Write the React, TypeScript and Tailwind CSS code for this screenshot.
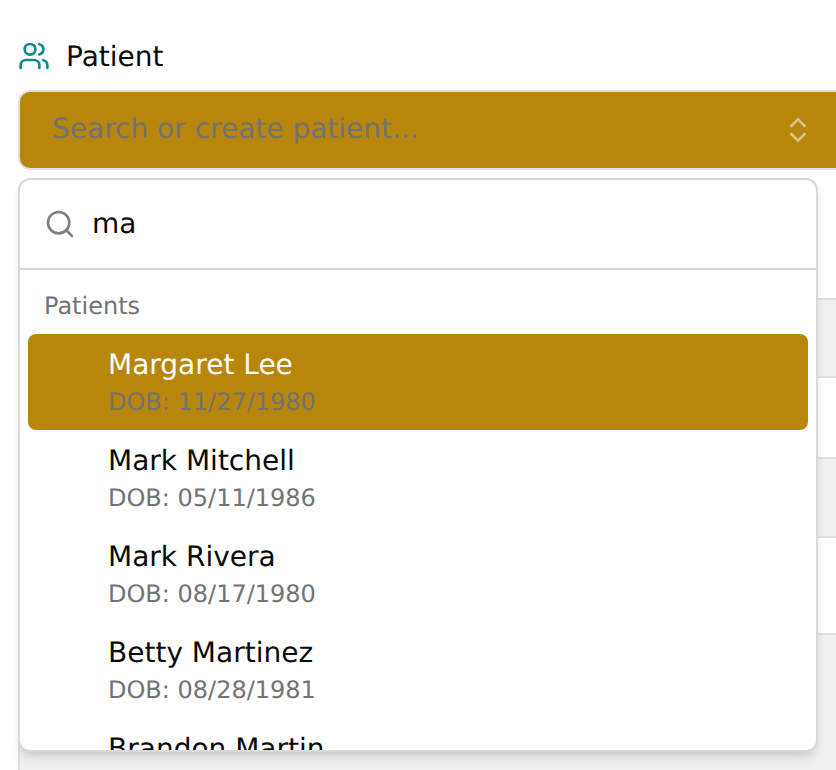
import { ChevronsUpDown, Search, Users } from "lucide-react";

const PATIENTS = [
  { name: "Margaret Lee", dob: "11/27/1980" },
  { name: "Mark Mitchell", dob: "05/11/1986" },
  { name: "Mark Rivera", dob: "08/17/1980" },
  { name: "Betty Martinez", dob: "08/28/1981" },
  { name: "Brandon Martin", dob: null },
];

const ROWS = [
  { h: "h-[78px]", bg: "bg-[#f0f0f0]" },
  { h: "h-[81px]", bg: "bg-white" },
  { h: "h-[79px]", bg: "bg-[#f0f0f0]" },
  { h: "h-[97px]", bg: "bg-white" },
  { h: "h-[140px]", bg: "bg-[#f0f0f0]" },
];

export default function App() {
  return (
    <div className="relative h-[770px] w-[836px] overflow-hidden bg-white pl-[18px] pt-[40px] font-['DejaVu_Sans',sans-serif] text-[28px] text-[#0a0a0a] opacity-[0.999] [text-rendering:geometricPrecision]">
      <div className="flex h-[32px] items-center gap-[16px]">
        <Users size={32} className="text-[#0d8a8a]" />
        <span className="mt-[2px]">Patient</span>
      </div>

      <div className="mt-[18px] flex h-[80px] w-[840px] items-center justify-between rounded-[12px] border-2 border-[#e0e0e0] bg-[#b8860b] pl-[32px] pr-[42px] text-[#737373]">
        <span className="mb-[2px]">Search or create patient...</span>
        <ChevronsUpDown size={32} className="text-white opacity-50" strokeWidth={2} />
      </div>

      {/* table sitting behind the popover */}
      <div className="mt-[128px] w-[840px] border-l-2 border-[#e0e0e0]">
        {ROWS.map((r, i) => (
          <div key={i} className={`${r.h} ${r.bg} border-t-2 border-[#e0e0e0]`} />
        ))}
      </div>

      <div className="absolute left-[18px] top-[178px] flex h-[574px] w-[800px] flex-col overflow-hidden rounded-[12px] border-2 border-[#d9d9d9] bg-white shadow-[0_8px_12px_-2px_rgba(0,0,0,0.1),0_4px_8px_-4px_rgba(0,0,0,0.1)]">
        <div className="flex h-[90px] shrink-0 items-center gap-[16px] border-b-2 border-[#d9d9d9] px-[24px]">
          <Search size={32} className="shrink-0 text-[#808080]" />
          <span>ma</span>
        </div>
        <div className="min-h-0 flex-1 overflow-hidden px-[8px] pt-[8px]">
          <div className="flex h-[56px] items-center px-[16px] text-[24px] text-[#737373]">Patients</div>
          {PATIENTS.map((p, i) => (
            <div
              key={p.name}
              className={`h-[96px] rounded-[8px] pl-[80px] pt-[11px] ${i === 0 ? "bg-[#b8860b] text-white" : ""}`}
            >
              <div className="mb-[1px] text-[28px] leading-[40px]">{p.name}</div>
              {p.dob && <div className="text-[24px] leading-[32px] text-[#737373]">DOB: {p.dob}</div>}
            </div>
          ))}
        </div>
      </div>
    </div>
  );
}
